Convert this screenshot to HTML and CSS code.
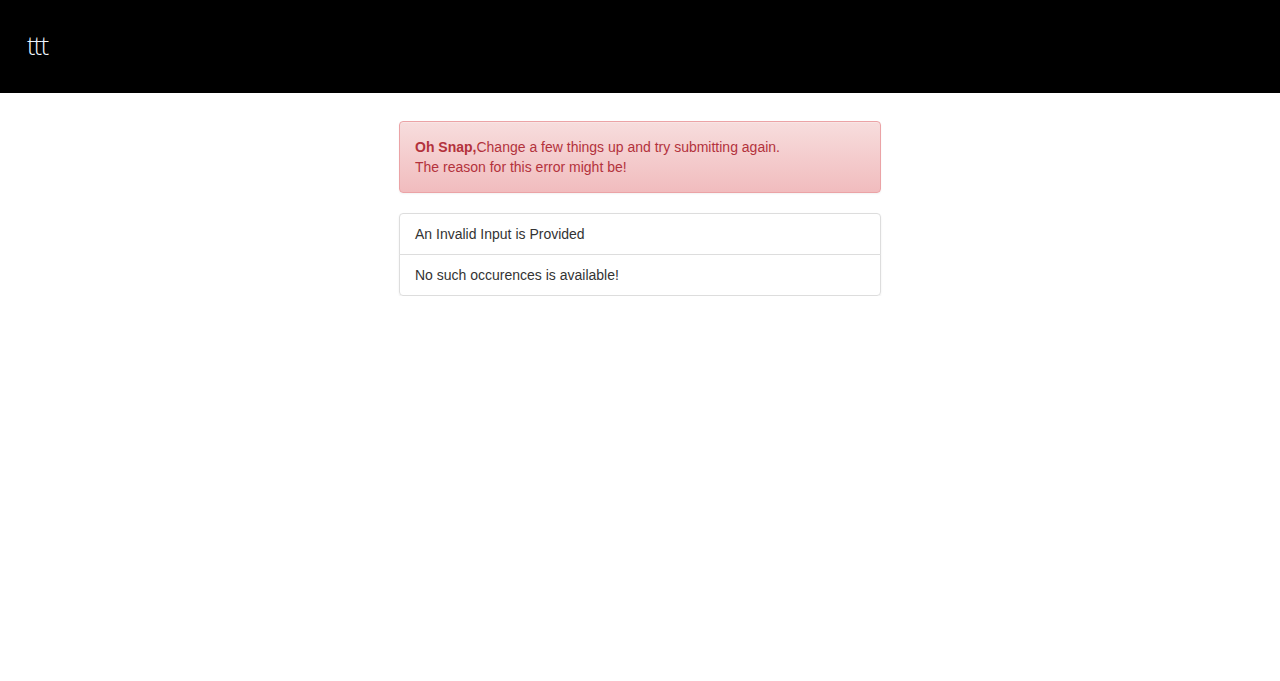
FILE: index.html
```html
<!DOCTYPE html>
<html>
<head>
<meta charset="utf-8">
<title>ttt</title>
<link rel="stylesheet" href="styles.css">
</head>
<body>
<nav class="navbar">
  <a class="brand" href="#">ttt</a>
</nav>
<main class="content">
  <div class="alert">
    <strong>Oh Snap,</strong>Change a few things up and try submitting again.<br>
    The reason for this error might be!
  </div>
  <ul class="list-group">
    <li class="list-item">An Invalid Input is Provided</li>
    <li class="list-item">No such occurences is available!</li>
  </ul>
</main>
</body>
</html>
```
FILE: styles.css
```css
* { box-sizing: border-box; }
html, body { margin: 0; padding: 0; }
body {
  font-family: "Liberation Sans", Arial, sans-serif;
  font-size: 14px;
  line-height: 20px;
  color: #333;
  background: #fff;
}
.navbar {
  height: 93px;
  background: #000;
  display: flex;
  align-items: center;
  padding: 0 27px;
}
.brand {
  color: #eef6ff;
  text-decoration: none;
  font-family: "Open Sans", "Liberation Sans", sans-serif;
  font-weight: 300;
  font-size: 25px;
  line-height: 24px;
  margin-top: -3px;
  letter-spacing: -1.5px;
}
.content {
  width: 482px;
  margin: 28px auto 0;
}
.alert {
  padding: 15px;
  border: 1px solid #eba3a6;
  border-radius: 4px;
  color: #b3323c;
  background-image: linear-gradient(to bottom, #f7dddd 0, #f1bcbe 100%);
  box-shadow: inset 0 1px 0 rgba(255,255,255,.25), 0 1px 2px rgba(0,0,0,.05);
  margin-bottom: 20px;
}
.alert strong { font-weight: bold; }
.list-group {
  list-style: none;
  margin: 0;
  padding: 0;
  border-radius: 4px;
  box-shadow: 0 1px 2px rgba(0,0,0,.075);
}
.list-item {
  padding: 10px 15px;
  border: 1px solid #ddd;
  background: #fff;
  margin-bottom: -1px;
}
.list-item:first-child { border-radius: 4px 4px 0 0; }
.list-item:last-child { border-radius: 0 0 4px 4px; margin-bottom: 0; }
```
